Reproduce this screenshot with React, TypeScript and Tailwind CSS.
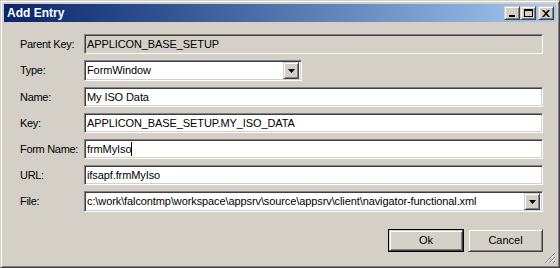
import React from "react";

const font = { fontFamily: '"Liberation Sans", Arial, sans-serif' };

const sunken =
  "border border-t-[#808080] border-l-[#808080] border-b-white border-r-white shadow-[inset_1px_1px_0_#404040,inset_-1px_-1px_0_#d4d0c8]";
const raised =
  "border border-t-[#d4d0c8] border-l-[#d4d0c8] border-b-[#404040] border-r-[#404040] shadow-[inset_1px_1px_0_#ffffff,inset_-1px_-1px_0_#808080]";

function Arrow() {
  return (
    <svg width="7" height="4" viewBox="0 0 7 4">
      <path d="M0 0h7L3.5 4z" fill="#000" />
    </svg>
  );
}

function Field({
  value,
  disabled,
  cursor,
}: {
  value: string;
  disabled?: boolean;
  cursor?: boolean;
}) {
  return (
    <div
      className={`h-[20px] flex-1 flex items-center pl-[2px] ${sunken} ${
        disabled ? "bg-[#d4d0c8]" : "bg-white"
      }`}
    >
      <span className="text-[11px] tracking-[-0.1px] text-black whitespace-nowrap leading-none">
        {value}
      </span>
      {cursor && <span className="w-px h-[14px] bg-black" />}
    </div>
  );
}

function Combo({ value, width }: { value: string; width?: string }) {
  return (
    <div
      className={`h-[21px] flex items-center bg-white pl-[2px] pr-[2px] ${sunken} ${
        width ?? "flex-1"
      }`}
    >
      <span className="flex-1 text-[11px] tracking-[-0.1px] text-black whitespace-nowrap leading-none">
        {value}
      </span>
      <div
        className={`w-[16px] h-[17px] bg-[#d4d0c8] flex items-center justify-center ${raised}`}
      >
        <Arrow />
      </div>
    </div>
  );
}

function Row({ label, children }: { label: string; children: React.ReactNode }) {
  return (
    <div className="flex items-center">
      <div className="w-[64px] shrink-0 text-[11px] tracking-[-0.3px] text-black leading-none">
        {label}
      </div>
      {children}
    </div>
  );
}

function TitleBtn({ children }: { children: React.ReactNode }) {
  return (
    <div
      className={`w-[16px] h-[14px] bg-[#d4d0c8] flex items-center justify-center ${raised}`}
    >
      {children}
    </div>
  );
}

export default function App() {
  return (
    <div
      className="w-[560px] h-[268px] bg-[#d4d0c8] border border-t-[#d4d0c8] border-l-[#d4d0c8] border-b-[#404040] border-r-[#404040] shadow-[inset_1px_1px_0_#ffffff,inset_-1px_-1px_0_#808080] p-[3px] flex flex-col relative"
      style={font}
    >
      {/* Title bar */}
      <div className="h-[18px] flex items-center pl-[3px] pr-[2px] bg-gradient-to-r from-[#0a246a] to-[#a6caf0]">
        <span className="flex-1 text-white font-bold text-[12px] leading-none">
          Add Entry
        </span>
        <div className="flex items-center">
          <TitleBtn>
            <div className="w-[6px] h-[2px] bg-black mt-[6px] -ml-[1px]" />
          </TitleBtn>
          <TitleBtn>
            <div className="w-[9px] h-[8px] border border-black border-t-2" />
          </TitleBtn>
          <div className="w-[2px]" />
          <TitleBtn>
            <svg width="8" height="7" viewBox="0 0 8 7">
              <path
                d="M0 0h2l2 2.3L6 0h2L5 3.5 8 7H6L4 4.7 2 7H0l3-3.5z"
                fill="#000"
              />
            </svg>
          </TitleBtn>
        </div>
      </div>

      {/* Content */}
      <div className="flex flex-col pl-[16px] pr-[13px] pt-[12px]">
        <div className="flex flex-col gap-[6px]">
          <Row label="Parent Key:">
            <Field value="APPLICON_BASE_SETUP" disabled />
          </Row>
          <Row label="Type:">
            <Combo value="FormWindow" width="w-[218px]" />
          </Row>
          <Row label="Name:">
            <Field value="My ISO Data" />
          </Row>
          <Row label="Key:">
            <Field value="APPLICON_BASE_SETUP.MY_ISO_DATA" />
          </Row>
          <Row label="Form Name:">
            <Field value="frmMyIso" cursor />
          </Row>
          <Row label="URL:">
            <Field value="ifsapf.frmMyIso" />
          </Row>
          <Row label="File:">
            <Combo value="c:\work\falcontmp\workspace\appsrv\source\appsrv\client\navigator-functional.xml" />
          </Row>
        </div>

        <div className="flex justify-end gap-[4px] mt-[17px]">
          <div className="w-[76px] h-[23px] border border-black">
            <div
              className={`w-full h-full flex items-center justify-center text-[11px] text-black ${raised}`}
            >
              Ok
            </div>
          </div>
          <div
            className={`w-[75px] h-[23px] flex items-center justify-center text-[11px] text-black ${raised}`}
          >
            Cancel
          </div>
        </div>
      </div>

      {/* Size grip */}
      <svg
        className="absolute right-[3px] bottom-[3px]"
        width="12"
        height="12"
        viewBox="0 0 12 12"
      >
        <path d="M11 1L1 11M11 5L5 11M11 9L9 11" stroke="#808080" strokeWidth="1" />
        <path d="M11 2L2 11M11 6L6 11M11 10L10 11" stroke="#ffffff" strokeWidth="1" />
      </svg>
    </div>
  );
}
